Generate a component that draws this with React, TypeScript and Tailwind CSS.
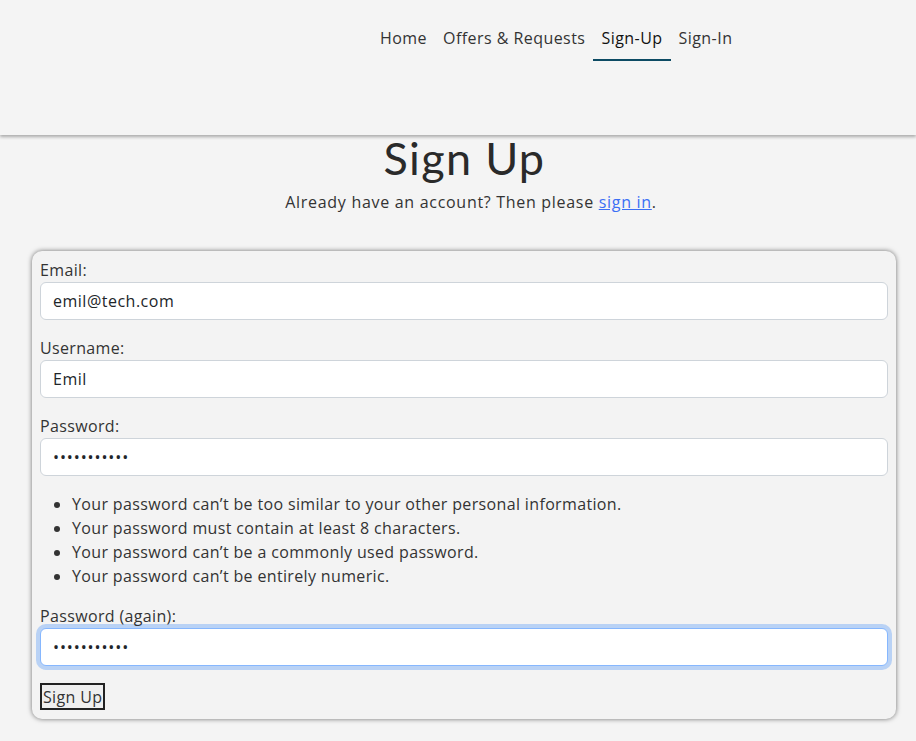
import React from "react";

const body = { fontFamily: '"Open Sans", "Noto Sans", sans-serif' };

export default function App() {
  const links = ["Home", "Offers & Requests", "Sign-Up", "Sign-In"];
  const help = [
    "Your password can’t be too similar to your other personal information.",
    "Your password must contain at least 8 characters.",
    "Your password can’t be a commonly used password.",
    "Your password can’t be entirely numeric.",
  ];
  const inputCls =
    "block w-full h-[38px] rounded-[6px] border border-[#ced4da] bg-white px-3 text-[16px] tracking-[0.5px] text-[#212529] outline-none";
  const labelCls = "block text-[16px] tracking-[0.35px] leading-[24px]";
  return (
    <div className="min-h-[741px] bg-[#f4f4f4] text-[#333]" style={body}>
      <header className="h-[135px] bg-[#f4f4f4] shadow-[0_2px_3px_rgba(0,0,0,0.3)] relative z-10">
        <nav className="flex pl-[372px] pt-[25px]">
          {links.map((l) => (
            <a
              key={l}
              className={
                "px-2 h-[36px] leading-[27px] text-[16px] tracking-[0.45px] border-b-2 " +
                (l === "Sign-Up"
                  ? "border-[#0c4a63] text-[#111] font-medium"
                  : "border-transparent text-[#333]")
              }
            >
              {l}
            </a>
          ))}
        </nav>
      </header>
      <main>
        <h1
          className="text-center pl-[13px] text-[45px] leading-[46px] tracking-[1.3px] text-[#2a2a2a]"
          style={{ fontFamily: '"Lato", "Open Sans", sans-serif', fontWeight: 400 }}
        >
          Sign Up
        </h1>
        <p className="text-center pl-[26px] text-[16px] tracking-[0.7px] leading-[24px] mt-[9px]">
          Already have an account? Then please{" "}
          <a className="text-[#3b6ff5] underline">sign in</a>.
        </p>
        <div className="mx-[32px] mt-[37px] w-[864px] rounded-[10px] bg-[#f3f3f3] px-[8px] pt-[7px] pb-[9px] shadow-[0_0_5px_rgba(0,0,0,0.55)]">
          <label className={labelCls}>Email:</label>
          <input className={inputCls} readOnly defaultValue="emil@tech.com" style={body} />
          <label className={labelCls + " mt-[16px]"}>Username:</label>
          <input className={inputCls} readOnly defaultValue="Emil" style={body} />
          <label className={labelCls + " mt-[16px]"}>Password:</label>
          <input
            className="block w-full h-[38px] rounded-[6px] border border-[#ced4da] bg-white px-3 text-[16px] tracking-[0.9px] text-[#212529] outline-none"
            readOnly
            type="password"
            defaultValue="abcdefghijk"
            style={body}
          />
          <ul className="list-disc pl-[32px] mt-[16px] text-[16px] tracking-[0.35px] leading-[24px]">
            {help.map((h) => (
              <li key={h}>{h}</li>
            ))}
          </ul>
          <label className={labelCls + " mt-[16px]"}>Password (again):</label>
          <input
            className="block w-full h-[38px] rounded-[6px] border border-[#86b7fe] bg-white px-3 text-[16px] tracking-[0.9px] text-[#212529] outline-none shadow-[0_0_0_4px_rgba(13,110,253,0.25)]"
            readOnly
            type="password"
            defaultValue="abcdefghijk"
            style={body}
          />
          <button className="mt-[17px] block h-[27px] px-[1px] border-2 border-[#222] bg-[#efefef] text-[16px] tracking-[0.35px] leading-[20px] text-[#333]">
            Sign Up
          </button>
        </div>
      </main>
    </div>
  );
}
